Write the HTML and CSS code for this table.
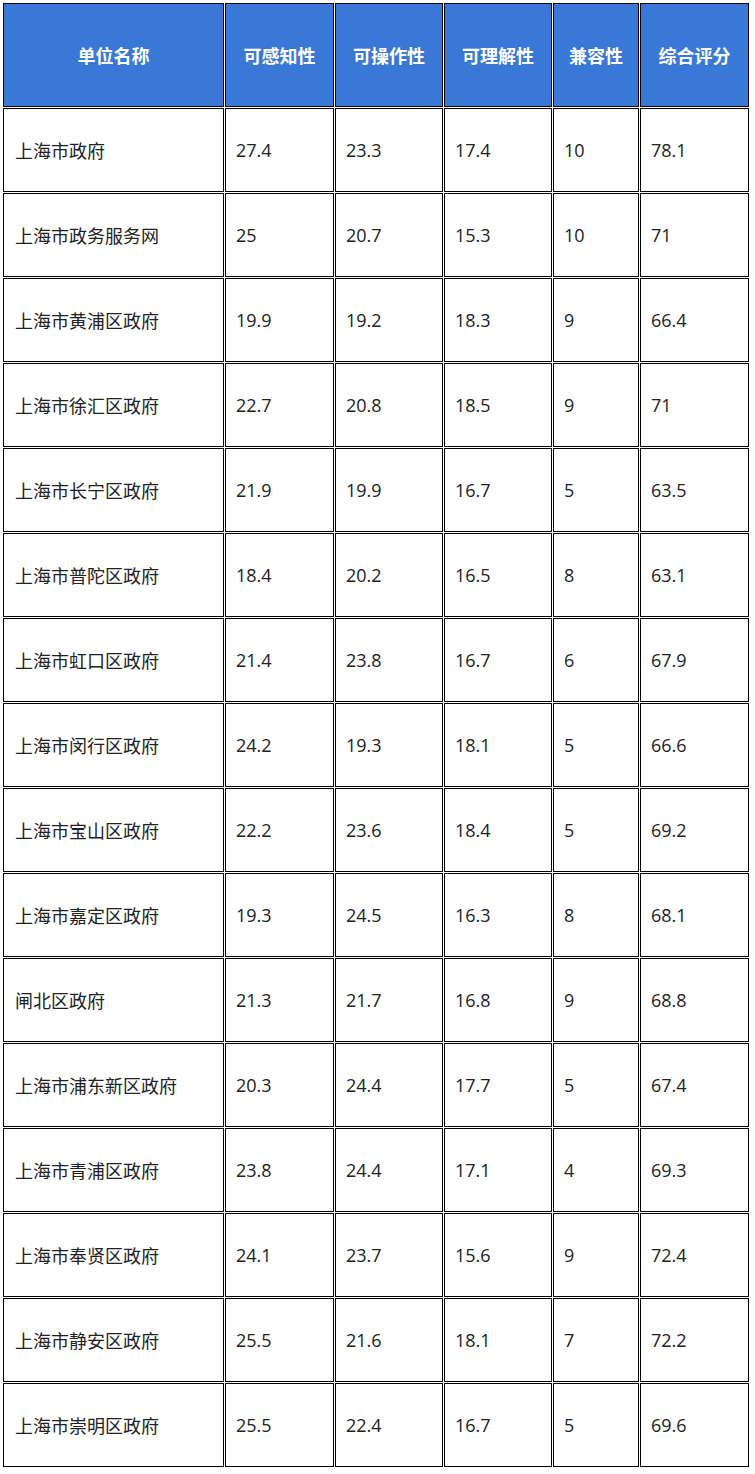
FILE: index.html
```html
<!DOCTYPE html>
<html lang="zh-CN">
<head>
<meta charset="utf-8">
<title>评估结果</title>
<link rel="stylesheet" href="styles.css">
</head>
<body>
<table class="score-table">
  <colgroup>
    <col class="c1"><col class="c2"><col class="c3"><col class="c4"><col class="c5"><col class="c6">
  </colgroup>
  <thead>
    <tr><th>单位名称</th><th>可感知性</th><th>可操作性</th><th>可理解性</th><th>兼容性</th><th>综合评分</th></tr>
  </thead>
  <tbody>
    <tr><td>上海市政府</td><td>27.4</td><td>23.3</td><td>17.4</td><td>10</td><td>78.1</td></tr>
    <tr><td>上海市政务服务网</td><td>25</td><td>20.7</td><td>15.3</td><td>10</td><td>71</td></tr>
    <tr><td>上海市黄浦区政府</td><td>19.9</td><td>19.2</td><td>18.3</td><td>9</td><td>66.4</td></tr>
    <tr><td>上海市徐汇区政府</td><td>22.7</td><td>20.8</td><td>18.5</td><td>9</td><td>71</td></tr>
    <tr><td>上海市长宁区政府</td><td>21.9</td><td>19.9</td><td>16.7</td><td>5</td><td>63.5</td></tr>
    <tr><td>上海市普陀区政府</td><td>18.4</td><td>20.2</td><td>16.5</td><td>8</td><td>63.1</td></tr>
    <tr><td>上海市虹口区政府</td><td>21.4</td><td>23.8</td><td>16.7</td><td>6</td><td>67.9</td></tr>
    <tr><td>上海市闵行区政府</td><td>24.2</td><td>19.3</td><td>18.1</td><td>5</td><td>66.6</td></tr>
    <tr><td>上海市宝山区政府</td><td>22.2</td><td>23.6</td><td>18.4</td><td>5</td><td>69.2</td></tr>
    <tr><td>上海市嘉定区政府</td><td>19.3</td><td>24.5</td><td>16.3</td><td>8</td><td>68.1</td></tr>
    <tr><td>闸北区政府</td><td>21.3</td><td>21.7</td><td>16.8</td><td>9</td><td>68.8</td></tr>
    <tr><td>上海市浦东新区政府</td><td>20.3</td><td>24.4</td><td>17.7</td><td>5</td><td>67.4</td></tr>
    <tr><td>上海市青浦区政府</td><td>23.8</td><td>24.4</td><td>17.1</td><td>4</td><td>69.3</td></tr>
    <tr><td>上海市奉贤区政府</td><td>24.1</td><td>23.7</td><td>15.6</td><td>9</td><td>72.4</td></tr>
    <tr><td>上海市静安区政府</td><td>25.5</td><td>21.6</td><td>18.1</td><td>7</td><td>72.2</td></tr>
    <tr><td>上海市崇明区政府</td><td>25.5</td><td>22.4</td><td>16.7</td><td>5</td><td>69.6</td></tr>
  </tbody>
</table>
</body>
</html>
```

FILE: styles.css
```css
html, body {
  margin: 0;
  padding: 0;
  background: #ffffff;
}

.score-table {
  margin: 2px 0 0 2px;
  border-collapse: separate;
  border-spacing: 1px;
  table-layout: fixed;
  width: 748px;
  font-family: "Open Sans", "Noto Sans CJK SC", sans-serif;
}

.c1 { width: 221px; }
.c2 { width: 109px; }
.c3 { width: 108px; }
.c4 { width: 108px; }
.c5 { width: 86px; }
.c6 { width: 109px; }

.score-table th,
.score-table td {
  box-sizing: border-box;
  border: 1px solid #000000;
  padding: 0;
  vertical-align: middle;
  overflow: hidden;
  white-space: nowrap;
}

.score-table th {
  height: 104px;
  background: #3a78d8;
  color: #ffffff;
  font-family: "Noto Sans CJK SC", sans-serif;
  font-weight: 700;
  font-size: 18px;
  text-align: center;
}

.score-table td {
  height: 84px;
  color: #222222;
  font-size: 18px;
  text-align: left;
  padding-left: 10px;
}

.score-table td:first-child {
  padding-left: 11px;
}
```
